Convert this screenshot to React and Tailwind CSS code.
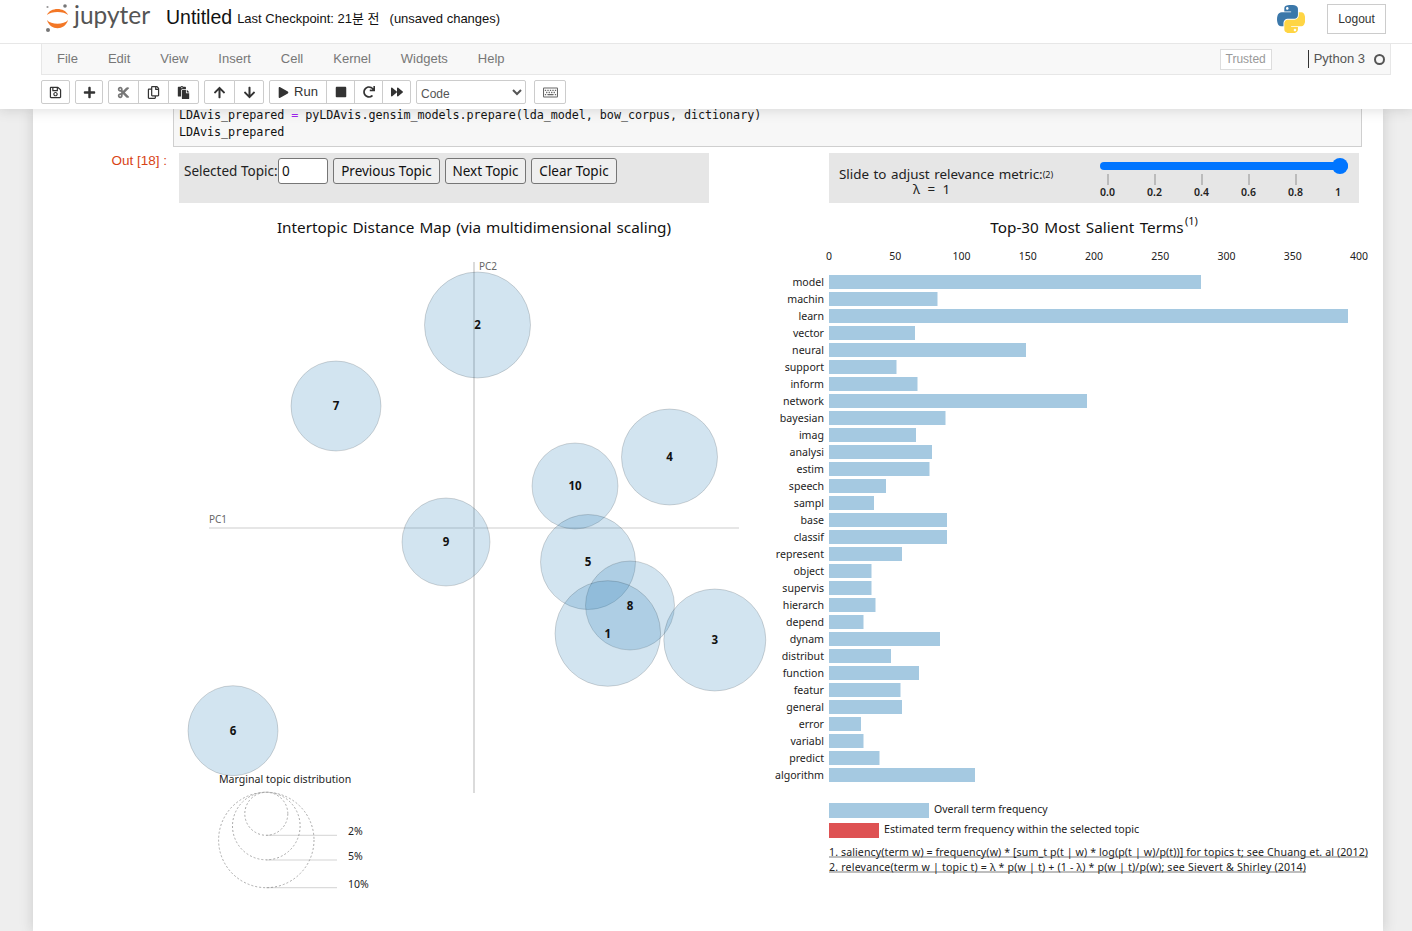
import React from 'react';
import {
    FaRegSave, FaPlus, FaCut, FaRegCopy, FaPaste, FaArrowUp, FaArrowDown,
    FaPlay, FaStop, FaRedo, FaForward, FaRegKeyboard,
} from 'react-icons/fa';

const MENU = ['File', 'Edit', 'View', 'Insert', 'Cell', 'Kernel', 'Widgets', 'Help'];

// page coordinates, read off the plot
const TOPICS = [
    { id: 2, x: 477.5, y: 325, r: 53 },
    { id: 7, x: 336, y: 406, r: 45 },
    { id: 4, x: 669.5, y: 457, r: 48 },
    { id: 10, x: 575, y: 486, r: 43 },
    { id: 9, x: 446, y: 542, r: 44 },
    { id: 5, x: 588, y: 562, r: 47.5 },
    { id: 8, x: 630, y: 605.5, r: 44.5 },
    { id: 1, x: 607.8, y: 633.5, r: 52.8 },
    { id: 3, x: 714.8, y: 640, r: 51 },
    { id: 6, x: 233, y: 730.7, r: 45 },
];

const TERMS = [
    ['model', 1201], ['machin', 937.5], ['learn', 1348], ['vector', 915], ['neural', 1026],
    ['support', 896.5], ['inform', 917.5], ['network', 1087], ['bayesian', 945.5], ['imag', 916],
    ['analysi', 932], ['estim', 929.5], ['speech', 886], ['sampl', 874], ['base', 947],
    ['classif', 947], ['represent', 902], ['object', 871.5], ['supervis', 871.5], ['hierarch', 875.5],
    ['depend', 863.5], ['dynam', 940], ['distribut', 891], ['function', 919], ['featur', 900.5],
    ['general', 902], ['error', 861], ['variabl', 863.5], ['predict', 879.5], ['algorithm', 975],
];

const AXIS = [0, 50, 100, 150, 200, 250, 300, 350, 400];

const ToolBtn = ({ children, className = 'w-[30px]' }) => (
    <button className={`h-[24px] flex items-center justify-center bg-white border border-[#ccc] -ml-px first:ml-0 first:rounded-l-[2px] last:rounded-r-[2px] text-[#333] ${className}`}>
        {children}
    </button>
);

const JupyterLogo = () => (
    <svg width="26" height="32" viewBox="0 0 26 32" className="shrink-0 self-start mt-[2px]">
        <path d="M2 13 C5 5 20 5 23 13 C19 9 6 9 2 13 Z" fill="#f37726" />
        <path d="M2 18 C5 29 20 29 23 18 C19 23 6 23 2 18 Z" fill="#f37726" />
        <circle cx="20" cy="4" r="1.8" fill="#767677" />
        <circle cx="2.5" cy="5" r="1.1" fill="#989798" />
        <circle cx="3" cy="28" r="2" fill="#767677" />
    </svg>
);

const PythonLogo = () => (
    <svg width="28" height="28" viewBox="0 0 110 110" className="shrink-0">
        <path fill="#3b78aa" fillRule="evenodd" d="M54.919 0c-4.584.022-8.961.413-12.812 1.095C30.76 3.099 28.7 7.295 28.7 15.032V25.25h26.813v3.406H18.638c-7.793 0-14.616 4.684-16.75 13.594-2.462 10.213-2.571 16.586 0 27.25 1.906 7.938 6.458 13.594 14.25 13.594h9.219v-12.25c0-8.85 7.657-16.656 16.75-16.656h26.781c7.454 0 13.406-6.138 13.406-13.625V15.032c0-7.266-6.13-12.725-13.406-13.937C64.282.328 59.502-.02 54.919 0zM40.419 8.22c2.77 0 5.031 2.299 5.031 5.125 0 2.816-2.262 5.094-5.031 5.094-2.78 0-5.031-2.278-5.031-5.094 0-2.826 2.252-5.125 5.031-5.125z" />
        <path fill="#ffd544" fillRule="evenodd" d="M85.638 28.657v11.906c0 9.231-7.826 17-16.75 17H42.106c-7.336 0-13.406 6.279-13.406 13.625v25.531c0 7.266 6.319 11.54 13.406 13.625 8.487 2.496 16.626 2.947 26.781 0 6.75-1.954 13.406-5.888 13.406-13.625V86.5H55.513v-3.406h40.188c7.793 0 10.696-5.436 13.406-13.594 2.8-8.399 2.68-16.476 0-27.25-1.926-7.757-5.604-13.594-13.406-13.594zM70.575 93.312c2.78 0 5.031 2.278 5.031 5.094 0 2.826-2.252 5.125-5.031 5.125-2.77 0-5.031-2.299-5.031-5.125 0-2.816 2.262-5.094 5.031-5.094z" />
    </svg>
);

// ── Left plot: topics + marginal distribution legend ──
const TopicMap = () => (
    <svg width="591" height="695" viewBox="179 205 591 695" className="shrink-0 font-['Noto_Sans',sans-serif]">
        <text x="474" y="233" textAnchor="middle" className="text-[15.3px] [word-spacing:1px]" fill="#111">Intertopic Distance Map (via multidimensional scaling)</text>

        <line x1="474" y1="262" x2="474" y2="793" stroke="#cfcfcf" strokeWidth="1.5" />
        <line x1="209" y1="528" x2="739" y2="528" stroke="#e6e6e6" strokeWidth="2" />
        <text x="479" y="270" className="text-[10px]" fill="#666">PC2</text>
        <text x="209" y="523" className="text-[10px]" fill="#666">PC1</text>

        {TOPICS.map((t) => (
            <circle key={t.id} cx={t.x} cy={t.y} r={t.r} fill="#1f77b4" fillOpacity="0.2" stroke="#000" strokeOpacity="0.15" />
        ))}
        {TOPICS.map((t) => (
            <text key={t.id} x={t.x} y={t.y + 4} textAnchor="middle" className="text-[11.5px] font-bold" fill="#111">{t.id}</text>
        ))}

        <text x="219" y="783" className="text-[10.6px]" fill="#222">Marginal topic distribution</text>
        <g fill="none" stroke="#aaa" strokeDasharray="2 2">
            <circle cx="266.3" cy="840" r="47.7" />
            <circle cx="266.3" cy="826" r="33.8" />
            <circle cx="266.3" cy="813.8" r="21.5" />
        </g>
        <g stroke="#808080" strokeOpacity="0.35">
            <line x1="266" y1="835.3" x2="337" y2="835.3" />
            <line x1="266" y1="860" x2="337" y2="860" />
            <line x1="266" y1="887.7" x2="337" y2="887.7" />
        </g>
        <g className="text-[10.5px]" fill="#222">
            <text x="348" y="835">2%</text>
            <text x="348" y="860">5%</text>
            <text x="348" y="888">10%</text>
        </g>
    </svg>
);

// ── Right plot: salient terms bars ──
const TermBars = () => (
    <svg width="605" height="695" viewBox="770 205 605 695" className="shrink-0 font-['Noto_Sans',sans-serif]">
        <text x="1087" y="233" textAnchor="middle" className="text-[15.3px] [word-spacing:1.5px]" fill="#111">Top-30 Most Salient Terms</text>
        <text x="1185" y="225" className="text-[11px]" fill="#111">(1)</text>

        {AXIS.map((v, i) => (
            <text key={v} x={829 + i * 66.25} y="260" textAnchor="middle" className="text-[10.5px]" fill="#222">{v}</text>
        ))}

        {TERMS.map(([term, end], i) => (
            <g key={term}>
                <rect x="829" y={275 + i * 17} width={end - 829} height="14" fill="#a5c9e1" />
                <text x="824" y={286 + i * 17} textAnchor="end" className="text-[10.6px]" fill="#222">{term}</text>
            </g>
        ))}

        <rect x="829" y="803" width="100" height="15" fill="#a5c9e1" />
        <text x="934" y="813" className="text-[10.5px]" fill="#222">Overall term frequency</text>
        <rect x="829" y="823" width="50" height="15" fill="#de5253" />
        <text x="884" y="833" className="text-[10.7px]" fill="#222">Estimated term frequency within the selected topic</text>

        <line x1="829" y1="857" x2="1368" y2="857" stroke="#a8a8a8" strokeWidth="1.5" />
        <line x1="829" y1="872" x2="1306" y2="872" stroke="#a8a8a8" strokeWidth="1.5" />
        <text x="829" y="856" className="text-[10.6px]" fill="#222" textLength="539">1. saliency(term w) = frequency(w) * [sum_t p(t | w) * log(p(t | w)/p(t))] for topics t; see Chuang et. al (2012)</text>
        <text x="829" y="871" className="text-[10.6px]" fill="#222" textLength="477">2. relevance(term w | topic t) = λ * p(w | t) + (1 - λ) * p(w | t)/p(w); see Sievert &amp; Shirley (2014)</text>
    </svg>
);

const TopicButton = ({ children, className }) => (
    <button className={`h-[26px] bg-[#efefef] border border-[#767676] rounded-[3px] text-[13.5px] text-[#111] ${className}`}>{children}</button>
);

export default function App() {
    return (
        <div className="h-[931px] overflow-hidden bg-[#eee] flex flex-col font-['Liberation_Sans','Noto_Sans_CJK_KR',sans-serif]">
            {/* Top chrome */}
            <div className="relative z-10 bg-white shadow-[0_0_12px_1px_rgba(87,87,87,0.2)] shrink-0">
                <div className="h-[44px] border-b border-[#e7e7e7] flex items-center pl-[45px] pr-[26px]">
                    <JupyterLogo />
                    <span className="ml-[3px] w-[92px] text-[24.5px] leading-none text-[#555] font-['Lato',sans-serif] mb-[13px]">jupyter</span>
                    <span className="text-[19.5px] text-[#111] mb-[8px]">Untitled</span>
                    <span className="ml-[5px] text-[13px] text-[#111] mb-[5px]">Last Checkpoint: 21분 전</span>
                    <span className="ml-[10px] text-[13px] text-[#111] mb-[5px]">(unsaved changes)</span>
                    <div className="ml-auto flex items-center mb-[6px]">
                        <PythonLogo />
                        <button className="ml-[22px] w-[59px] h-[30px] border border-[#ccc] text-[12px] text-[#333]">Logout</button>
                    </div>
                </div>

                <div className="ml-[41px] w-[1350px] h-[31px] bg-[#f8f8f8] border border-t-0 border-[#e7e7e7] flex items-center text-[13px] text-[#777]">
                    {MENU.map((m) => (
                        <span key={m} className="px-[15px]">{m}</span>
                    ))}
                    <span className="ml-auto w-[52px] h-[21px] bg-white border border-[#ddd] text-[12px] text-[#999] flex items-center justify-center">Trusted</span>
                    <span className="ml-[36px] h-[18px] border-l border-[#333] pl-[5px] text-[13px] leading-[18px] text-[#555]">Python 3</span>
                    <span className="ml-[9px] mr-[5px] w-[11px] h-[11px] rounded-full border-2 border-[#555]" />
                </div>

                <div className="h-[34px] pl-[41px] flex items-center gap-[5px]">
                    <div className="flex"><ToolBtn className="w-[29px]"><FaRegSave size={13} /></ToolBtn></div>
                    <div className="flex"><ToolBtn className="w-[28px]"><FaPlus size={13} /></ToolBtn></div>
                    <div className="flex">
                        <ToolBtn className="w-[31px]"><FaCut size={13} className="text-[#777]" /></ToolBtn>
                        <ToolBtn className="w-[31px]"><FaRegCopy size={13} /></ToolBtn>
                        <ToolBtn className="w-[31px]"><FaPaste size={13} /></ToolBtn>
                    </div>
                    <div className="flex">
                        <ToolBtn className="w-[31px]"><FaArrowUp size={13} /></ToolBtn>
                        <ToolBtn className="w-[30px]"><FaArrowDown size={13} /></ToolBtn>
                    </div>
                    <div className="flex">
                        <ToolBtn className="w-[58px] gap-[5px] text-[13px]"><FaPlay size={11} />Run</ToolBtn>
                        <ToolBtn className="w-[29px]"><FaStop size={12} /></ToolBtn>
                        <ToolBtn className="w-[29px]"><FaRedo size={12} /></ToolBtn>
                        <ToolBtn className="w-[29px]"><FaForward size={12} /></ToolBtn>
                    </div>
                    <select defaultValue="Code" className="w-[110px] h-[24px] bg-white border border-[#ccc] rounded-[2px] pt-[3px] text-[12px] text-[#555]">
                        <option>Code</option>
                        <option>Markdown</option>
                    </select>
                    <div className="flex ml-[3px]"><ToolBtn className="w-[32px]"><FaRegKeyboard size={15} className="text-[#666]" /></ToolBtn></div>
                </div>
            </div>

            {/* Notebook sheet */}
            <div className="ml-[33px] w-[1350px] flex-1 bg-white shadow-[0_0_12px_1px_rgba(87,87,87,0.2)]">
                <div className="-mt-[3px] ml-[140px] w-[1189px] h-[41px] bg-[#f7f7f7] border border-t-0 border-[#cfcfcf] pl-[5px] pt-[1px] font-['DejaVu_Sans_Mono',monospace] text-[11.75px] tracking-[-0.06px] leading-[17px] text-[#111]">
                    <div>LDAvis_prepared <span className="text-[#a020f0]">=</span> pyLDAvis.gensim_models.prepare(lda_model, bow_corpus, dictionary)</div>
                    <div>LDAvis_prepared</div>
                </div>

                <div className="mt-[6px] flex">
                    <div className="w-[134px] shrink-0 text-right text-[13.5px] leading-[15px] text-[#d84315]">Out [18] :</div>
                    <div className="ml-[12px] w-[1180px] shrink-0">
                        {/* Controls */}
                        <div className="flex justify-between font-['Noto_Sans',sans-serif]">
                            <div className="w-[530px] h-[50px] bg-[#e6e6e6] pl-[5px] pt-[5px] flex items-start">
                                <span className="w-[94px] text-[13.5px] leading-[26px] text-[#222] whitespace-nowrap">Selected Topic:</span>
                                <input readOnly value="0" className="w-[50px] h-[26px] bg-white border border-[#767676] rounded-[3px] pl-[3px] text-[13.5px] text-[#111]" />
                                <TopicButton className="ml-[5px] w-[107px]">Previous Topic</TopicButton>
                                <TopicButton className="ml-[5px] w-[81px]">Next Topic</TopicButton>
                                <TopicButton className="ml-[5px] w-[86px]">Clear Topic</TopicButton>
                            </div>
                            <div className="w-[530px] h-[50px] bg-[#e6e6e6] flex">
                                <div className="w-[271px] pl-[10px] pt-[14px] text-[13.4px] leading-[15px] text-[#222] whitespace-nowrap [word-spacing:1px]">
                                    <div>Slide to adjust relevance metric:<span className="text-[9px] align-top">(2)</span></div>
                                    <div className="pl-[74px] [word-spacing:4px]">λ = 1</div>
                                </div>
                                <div className="w-[248px] pt-[9px]">
                                    <div className="relative h-[8px] rounded-full bg-[#0075ff]">
                                        <div className="absolute right-0 -top-[4px] w-[16px] h-[16px] rounded-full bg-[#0075ff]" />
                                    </div>
                                    <div className="mt-[4px] -ml-[16px] flex text-[10.5px] font-semibold leading-[14px] text-[#222]">
                                        {['0.0', '0.2', '0.4', '0.6', '0.8'].map((l) => (
                                            <div key={l} className="w-[47px] shrink-0 flex flex-col items-center">
                                                <div className="w-[2px] h-[11px] bg-[#bbb]" />
                                                <span>{l}</span>
                                            </div>
                                        ))}
                                        <span className="self-end ml-[16px]">1</span>
                                    </div>
                                </div>
                            </div>
                        </div>

                        {/* Plots */}
                        <div className="mt-[2px] flex">
                            <TopicMap />
                            <TermBars />
                        </div>
                    </div>
                </div>
            </div>
        </div>
    );
}
